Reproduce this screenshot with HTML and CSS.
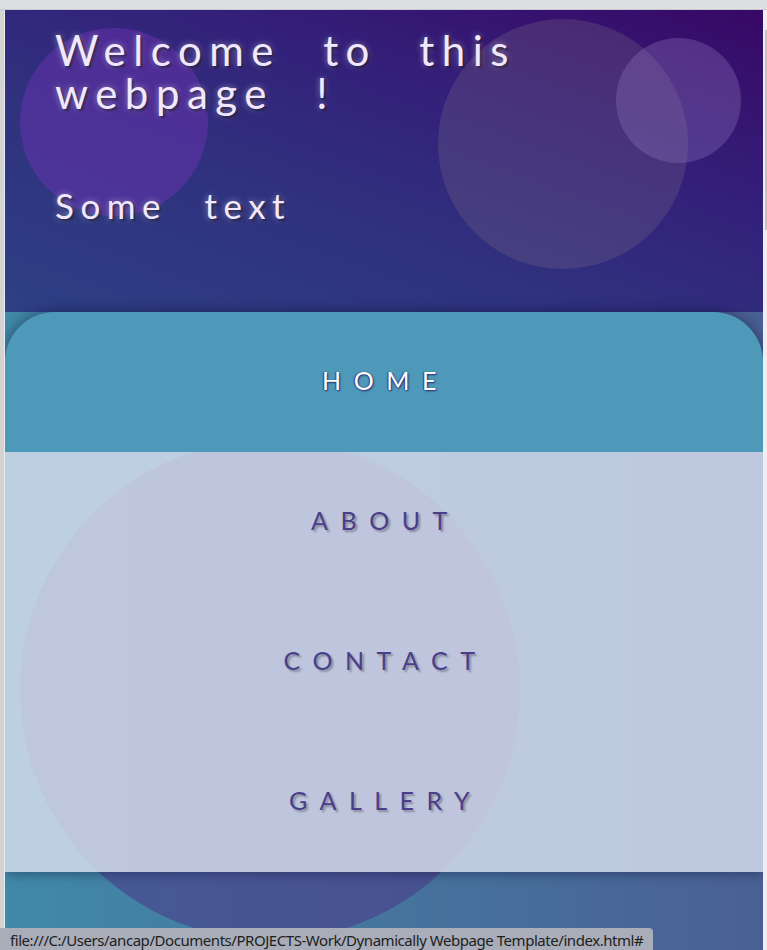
FILE: index.html
```html
<!DOCTYPE html>
<html lang="en">
<head>
<meta charset="utf-8">
<title>Dynamically Webpage Template</title>
<link rel="stylesheet" href="styles.css">
</head>
<body>
<div class="window">
  <div class="topbar"></div>
  <div class="frame">
    <div class="leftedge"></div>
    <main class="page">
      <header class="hero">
        <span class="bubble bubble-left"></span>
        <span class="bubble bubble-big"></span>
        <span class="bubble bubble-small"></span>
        <h1 class="hero-title">Welcome to this webpage !</h1>
        <p class="hero-text">Some text</p>
      </header>
      <span class="bubble bubble-nav"></span>
      <nav class="menu">
        <a class="menu-item active" href="#">HOME</a>
        <a class="menu-item" href="#">ABOUT</a>
        <a class="menu-item" href="#">CONTACT</a>
        <a class="menu-item" href="#">GALLERY</a>
      </nav>
      <footer class="foot"></footer>
    </main>
    <div class="scrollbar"><div class="thumb"></div></div>
  </div>
  <div class="status">file:///C:/Users/ancap/Documents/PROJECTS-Work/Dynamically Webpage Template/index.html#</div>
</div>
</body>
</html>
```
FILE: styles.css
```css
* { box-sizing: border-box; }
html, body { margin: 0; padding: 0; }
body {
  width: 767px;
  height: 950px;
  overflow: hidden;
  font-family: "Lato", "Noto Sans", sans-serif;
  background: #dcdde1;
}
.window {
  position: relative;
  display: flex;
  flex-direction: column;
  width: 767px;
  height: 950px;
}
.topbar {
  height: 10px;
  flex: none;
  background: #dedfe3;
  border-bottom: 1px solid #c9cacf;
}
.frame {
  flex: 1;
  display: flex;
  min-height: 0;
}
.leftedge {
  width: 5px;
  flex: none;
  background: #d3d3d3;
  border-right: 1px solid #ececec;
}
.page {
  position: relative;
  flex: 1;
  display: flex;
  flex-direction: column;
  overflow: hidden;
  background: linear-gradient(90deg, #4189a8 0%, #45779f 45%, #4a6094 100%);
}
.scrollbar {
  width: 4px;
  flex: none;
  background: #efefef;
  padding-top: 20px;
  display: flex;
  justify-content: flex-end;
}
.thumb {
  width: 2px;
  height: 200px;
  background: #c2c2c2;
}

/* hero */
.hero {
  position: relative;
  height: 302px;
  flex: none;
  padding: 19px 0 0 50px;
  overflow: hidden;
  background: linear-gradient(20deg, #2e4084 0%, #30307e 40%, #33207a 65%, #380866 100%);
  color: #f1e8ff;
}
.bubble {
  position: absolute;
  border-radius: 50%;
  pointer-events: none;
}
.bubble-left {
  left: 15px; top: 18px;
  width: 188px; height: 188px;
  background: rgba(112, 52, 182, 0.45);
}
.bubble-big {
  left: 433px; top: 9px;
  width: 250px; height: 250px;
  background: rgba(120, 102, 132, 0.3);
}
.bubble-small {
  left: 611px; top: 28px;
  width: 125px; height: 125px;
  background: rgba(140, 115, 185, 0.35);
}
.hero-title, .hero-text {
  position: relative;
  margin: 0;
  font-weight: 400;
  text-shadow: 2px 2px 3px rgba(0, 0, 0, 0.55), 0 0 6px rgba(255, 255, 255, 0.45);
}
.hero-title {
  font-size: 42px;
  line-height: 43px;
  letter-spacing: 7.5px;
  word-spacing: 24px;
  width: 580px;
}
.hero-text {
  margin-top: 69px;
  font-size: 35px;
  line-height: 42px;
  letter-spacing: 6.5px;
  word-spacing: 22px;
}

/* nav */
.bubble-nav {
  left: 15px; top: 430px;
  width: 500px; height: 500px;
  background: rgba(75, 55, 135, 0.55);
  z-index: 0;
}
.menu {
  position: relative;
  z-index: 1;
  flex: none;
  display: flex;
  flex-direction: column;
  border-radius: 50px 50px 0 0;
  overflow: hidden;
  box-shadow: 0 0 14px rgba(10, 10, 50, 0.5);
}
.menu-item {
  height: 140px;
  display: flex;
  align-items: center;
  justify-content: center;
  padding: 0 0 5px 3px;
  text-decoration: none;
  font-size: 25px;
  font-weight: 400;
  letter-spacing: 12.5px;
  color: #4a3e8b;
  background: rgba(220, 226, 240, 0.8);
  text-shadow: 2px 2px 2px rgba(0, 0, 0, 0.3);
}
.menu-item.active {
  background: #4e99b9;
  color: #ffffff;
  text-shadow: 1px 1px 2px #26236e, -1px 0 1px #3a3a8a;
}
.foot {
  flex: 1;
}

/* status bar */
.status {
  position: absolute;
  left: 0;
  bottom: 0;
  height: 22px;
  padding: 0 10px;
  background: #a9adb9;
  border-top-right-radius: 4px;
  font-family: "Noto Sans", "Open Sans", sans-serif;
  font-size: 15px;
  line-height: 24px;
  color: #1d1d1d;
  white-space: nowrap;
  letter-spacing: -0.45px;
}
```
